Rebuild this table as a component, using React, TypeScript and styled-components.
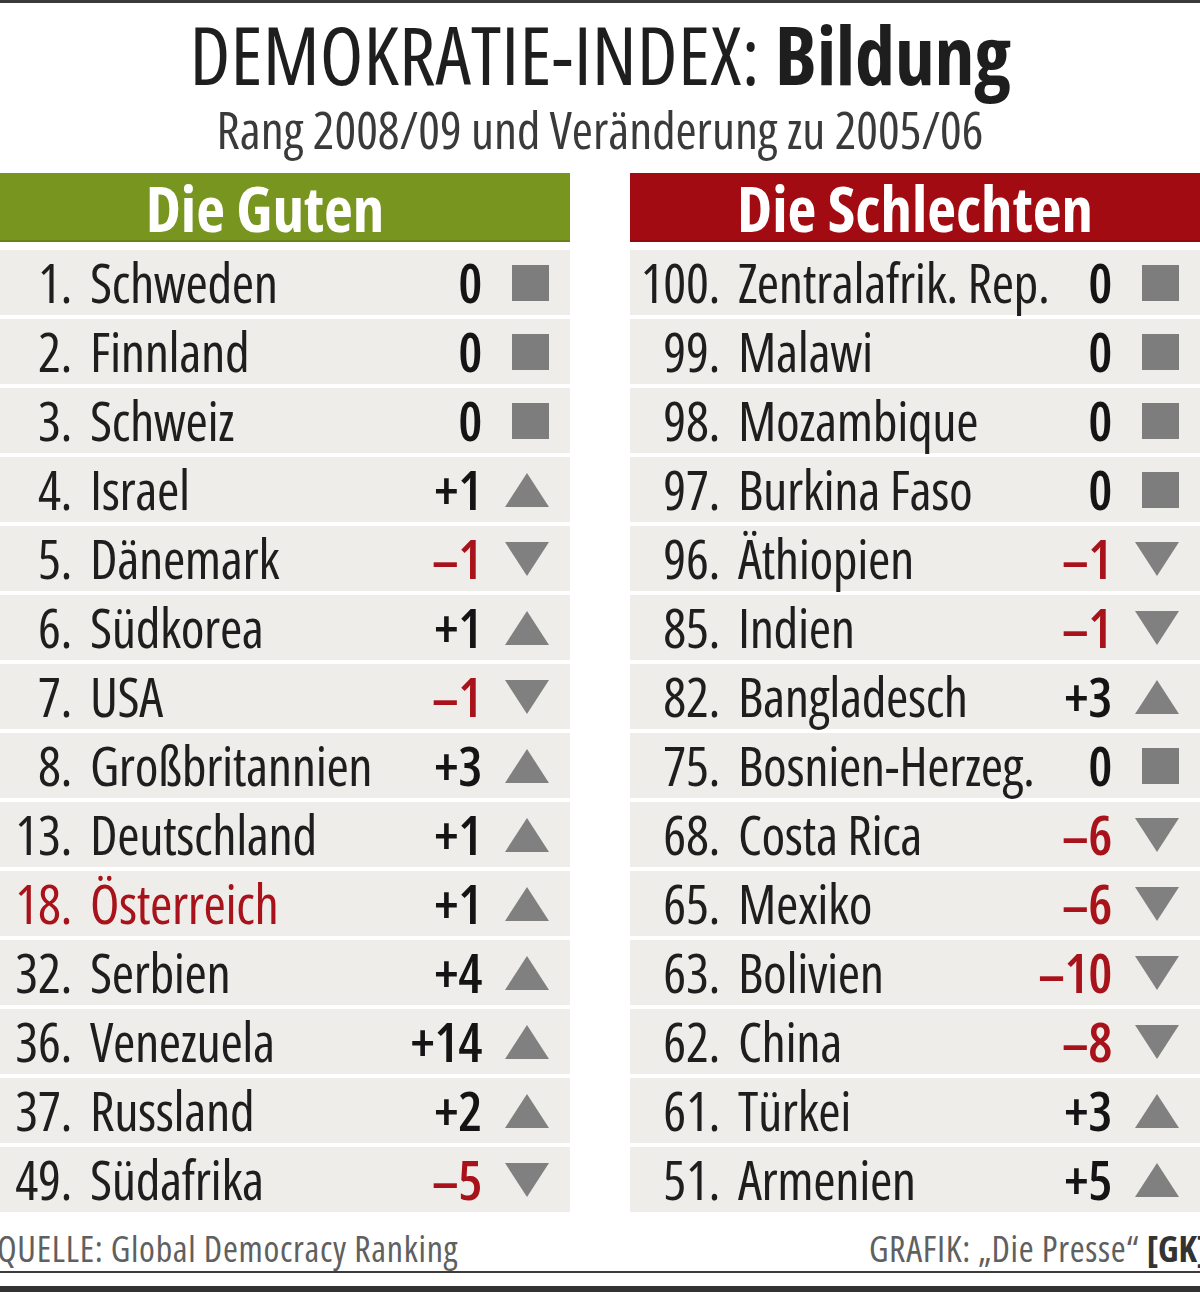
import React from "react";
import styled, { createGlobalStyle } from "styled-components";

const Global = createGlobalStyle`
  html, body { margin: 0; padding: 0; background: #fff; }
`;

type Trend = "up" | "down" | "same";
type Entry = { rank: number; name: string; change: string; trend: Trend; highlight?: boolean };

const good: Entry[] = [
  { rank: 1, name: "Schweden", change: "0", trend: "same" },
  { rank: 2, name: "Finnland", change: "0", trend: "same" },
  { rank: 3, name: "Schweiz", change: "0", trend: "same" },
  { rank: 4, name: "Israel", change: "+1", trend: "up" },
  { rank: 5, name: "Dänemark", change: "–1", trend: "down" },
  { rank: 6, name: "Südkorea", change: "+1", trend: "up" },
  { rank: 7, name: "USA", change: "–1", trend: "down" },
  { rank: 8, name: "Großbritannien", change: "+3", trend: "up" },
  { rank: 13, name: "Deutschland", change: "+1", trend: "up" },
  { rank: 18, name: "Österreich", change: "+1", trend: "up", highlight: true },
  { rank: 32, name: "Serbien", change: "+4", trend: "up" },
  { rank: 36, name: "Venezuela", change: "+14", trend: "up" },
  { rank: 37, name: "Russland", change: "+2", trend: "up" },
  { rank: 49, name: "Südafrika", change: "–5", trend: "down" },
];

const bad: Entry[] = [
  { rank: 100, name: "Zentralafrik. Rep.", change: "0", trend: "same" },
  { rank: 99, name: "Malawi", change: "0", trend: "same" },
  { rank: 98, name: "Mozambique", change: "0", trend: "same" },
  { rank: 97, name: "Burkina Faso", change: "0", trend: "same" },
  { rank: 96, name: "Äthiopien", change: "–1", trend: "down" },
  { rank: 85, name: "Indien", change: "–1", trend: "down" },
  { rank: 82, name: "Bangladesch", change: "+3", trend: "up" },
  { rank: 75, name: "Bosnien-Herzeg.", change: "0", trend: "same" },
  { rank: 68, name: "Costa Rica", change: "–6", trend: "down" },
  { rank: 65, name: "Mexiko", change: "–6", trend: "down" },
  { rank: 63, name: "Bolivien", change: "–10", trend: "down" },
  { rank: 62, name: "China", change: "–8", trend: "down" },
  { rank: 61, name: "Türkei", change: "+3", trend: "up" },
  { rank: 51, name: "Armenien", change: "+5", trend: "up" },
];

const RED = "#a8121a";

const Page = styled.div`
  width: 1200px;
  height: 1292px;
  box-sizing: border-box;
  overflow: hidden;
  background: #fff;
  border-top: 3px solid #3a3a3a;
  display: flex;
  flex-direction: column;
  font-family: "Open Sans", "Noto Sans", sans-serif;
  font-stretch: 75%;
  color: #1c1c1c;
`;

const Title = styled.h1`
  margin: 11px 0 0;
  height: 80px;
  font-size: 80px;
  line-height: 80px;
  font-weight: 400;
  text-align: center;
  color: #1e1e1e;
  white-space: nowrap;
  letter-spacing: 0.2px;

  strong {
    font-weight: 700;
    letter-spacing: -0.3px;
  }
`;

const Subtitle = styled.p`
  margin: 11px 0 0;
  height: 48px;
  font-size: 51px;
  line-height: 48px;
  font-weight: 400;
  text-align: center;
  color: #3a3a3a;
  white-space: nowrap;
`;

const Columns = styled.div`
  margin-top: 20px;
  display: grid;
  grid-template-columns: 570px 570px;
  column-gap: 60px;
`;

const Column = styled.section`
  display: flex;
  flex-direction: column;
  gap: 4px;
`;

const Header = styled.h2<{ $bg: string; $shift: number }>`
  margin: 0 0 4px;
  height: 69px;
  background: ${(p) => p.$bg};
  color: #fff;
  font-size: 63px;
  line-height: 69px;
  font-weight: 700;
  text-align: center;
  padding-right: ${(p) => p.$shift}px;
  box-shadow: inset 0 -2px 0 rgba(0, 0, 0, 0.12);
`;

const Row = styled.div<{ $rankW: number; $hl?: boolean }>`
  height: 65px;
  display: grid;
  grid-template-columns: ${(p) => p.$rankW}px 1fr auto 50px;
  column-gap: 18px;
  align-items: center;
  padding-right: 20px;
  background: #efedea;
  font-size: 54px;
  line-height: 65px;
  white-space: nowrap;
  color: ${(p) => (p.$hl ? RED : "#1e1e1e")};
  letter-spacing: -0.4px;
`;

const Rank = styled.span`
  text-align: right;
`;

const Name = styled.span`
  overflow: visible;
`;

const Change = styled.span<{ $neg: boolean }>`
  text-align: right;
  font-weight: 600;
  color: ${(p) => (p.$neg ? RED : "#141414")};
`;

const IconCell = styled.span`
  display: flex;
  align-items: center;
  justify-content: flex-end;
  height: 65px;

  svg {
    flex: none;
  }
`;

const Footer = styled.footer`
  margin-top: 17px;
  height: 40px;
  display: flex;
  justify-content: space-between;
  align-items: center;
  font-size: 36px;
  font-weight: 400;
  letter-spacing: 0.7px;
  line-height: 40px;
  color: #606060;
  white-space: nowrap;
`;

const Source = styled.span`
  margin-left: -3px;
`;

const Credit = styled.span`
  margin-right: -8px;

  b {
    font-weight: 700;
    color: #333;
    letter-spacing: 0;
  }
`;

const BottomRule = styled.div`
  margin-top: 2px;
  height: 13px;
  border-top: 2px solid #3c3c3c;
  border-bottom: 6px solid #333;
`;

function TrendIcon({ trend }: { trend: Trend }) {
  if (trend === "same") {
    return (
      <svg width="46" height="40" viewBox="0 0 46 40">
        <rect x="8" y="2" width="37" height="36" fill="#7d7d7d" />
      </svg>
    );
  }
  if (trend === "up") {
    return (
      <svg width="46" height="40" viewBox="0 0 46 40">
        <polygon points="23,3 45,37 1,37" fill="#808080" />
      </svg>
    );
  }
  return (
    <svg width="46" height="40" viewBox="0 0 46 40">
      <polygon points="1,3 45,3 23,37" fill="#808080" />
    </svg>
  );
}

function Table({
  title,
  color,
  shift,
  rankW,
  entries,
}: {
  title: string;
  color: string;
  shift: number;
  rankW: number;
  entries: Entry[];
}) {
  return (
    <Column>
      <Header $bg={color} $shift={shift}>
        {title}
      </Header>
      {entries.map((e) => (
        <Row key={e.rank} $rankW={rankW} $hl={e.highlight}>
          <Rank>{e.rank}.</Rank>
          <Name>{e.name}</Name>
          <Change $neg={e.change.startsWith("–")}>{e.change}</Change>
          <IconCell>
            <TrendIcon trend={e.trend} />
          </IconCell>
        </Row>
      ))}
    </Column>
  );
}

export default function App() {
  return (
    <>
      <Global />
      <Page>
        <Title>
          DEMOKRATIE-INDEX: <strong>Bildung</strong>
        </Title>
        <Subtitle>Rang 2008/09 und Veränderung zu 2005/06</Subtitle>
        <Columns>
          <Table title="Die Guten" color="#77951f" shift={40} rankW={72} entries={good} />
          <Table title="Die Schlechten" color="#a30b12" shift={0} rankW={90} entries={bad} />
        </Columns>
        <Footer>
          <Source>QUELLE: Global Democracy Ranking</Source>
          <Credit>
            GRAFIK: „Die Presse“ <b>[GK]</b>
          </Credit>
        </Footer>
        <BottomRule />
      </Page>
    </>
  );
}
